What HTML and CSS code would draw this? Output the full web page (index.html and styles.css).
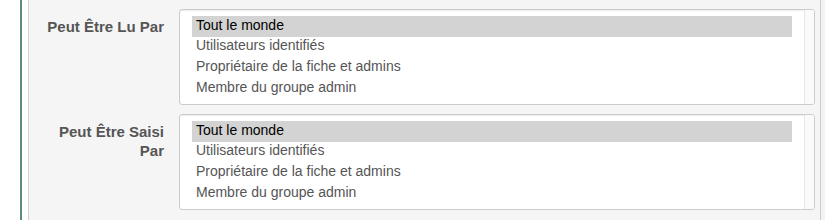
FILE: index.html
```html
<!DOCTYPE html>
<html lang="fr">
<head>
<meta charset="utf-8">
<title>Permissions</title>
<link rel="stylesheet" href="styles.css">
</head>
<body>
<div class="page">
  <div class="gutter"></div>
  <div class="accent"></div>
  <div class="spacer"></div>
  <div class="panel">
    <div class="form-row">
      <label class="label">Peut Être Lu Par</label>
      <div class="listbox">
        <div class="list">
          <div class="opt selected">Tout le monde</div>
          <div class="opt">Utilisateurs identifiés</div>
          <div class="opt">Propriétaire de la fiche et admins</div>
          <div class="opt">Membre du groupe admin</div>
        </div>
        <div class="scroll"></div>
      </div>
    </div>
    <div class="form-row">
      <label class="label">Peut Être Saisi Par</label>
      <div class="listbox">
        <div class="list">
          <div class="opt selected">Tout le monde</div>
          <div class="opt">Utilisateurs identifiés</div>
          <div class="opt">Propriétaire de la fiche et admins</div>
          <div class="opt">Membre du groupe admin</div>
        </div>
        <div class="scroll"></div>
      </div>
    </div>
  </div>
  <div class="rest"></div>
</div>
</body>
</html>
```
FILE: styles.css
```css
html, body {
  margin: 0;
  padding: 0;
  background: #ffffff;
  font-family: "Liberation Sans", Arial, Helvetica, sans-serif;
  font-size: 14px;
}
.page {
  display: flex;
  height: 220px;
}
.gutter {
  width: 20px;
  flex: 0 0 20px;
}
.accent {
  width: 2px;
  flex: 0 0 2px;
  background: #5a8f75;
}
.spacer {
  width: 6px;
  flex: 0 0 6px;
}
.panel {
  flex: 0 0 793px;
  box-sizing: border-box;
  background: #f5f5f5;
  border-left: 1px solid #d2d2d2;
  border-right: 1px solid #cccccc;
  padding-top: 9px;
  display: flex;
  flex-direction: column;
  gap: 9px;
}
.rest {
  flex: 1;
  background: #f3f3f3;
}
.form-row {
  display: flex;
  align-items: flex-start;
}
.label {
  flex: 0 0 150px;
  box-sizing: border-box;
  padding: 8px 15px 0 14px;
  text-align: right;
  font-size: 15px;
  font-weight: bold;
  color: #555555;
  line-height: 19px;
}
.listbox {
  flex: 0 0 636px;
  height: 96px;
  box-sizing: border-box;
  display: flex;
  background: #ffffff;
  border: 1px solid #cccccc;
  border-radius: 3px;
  box-shadow: inset 0 1px 1px rgba(0, 0, 0, 0.075);
  overflow: hidden;
}
.list {
  flex: 1;
  padding: 6px 12px;
}
.opt {
  height: 20.7px;
  box-sizing: border-box;
  padding: 0.7px 0 0 4px;
  line-height: 16px;
  color: #555555;
  white-space: nowrap;
}
.opt.selected {
  background: #d3d3d3;
  color: #000000;
}
.scroll {
  flex: 0 0 10px;
  box-sizing: border-box;
  background: #fafafa;
  border-left: 1px solid #e6e6e6;
}
```
